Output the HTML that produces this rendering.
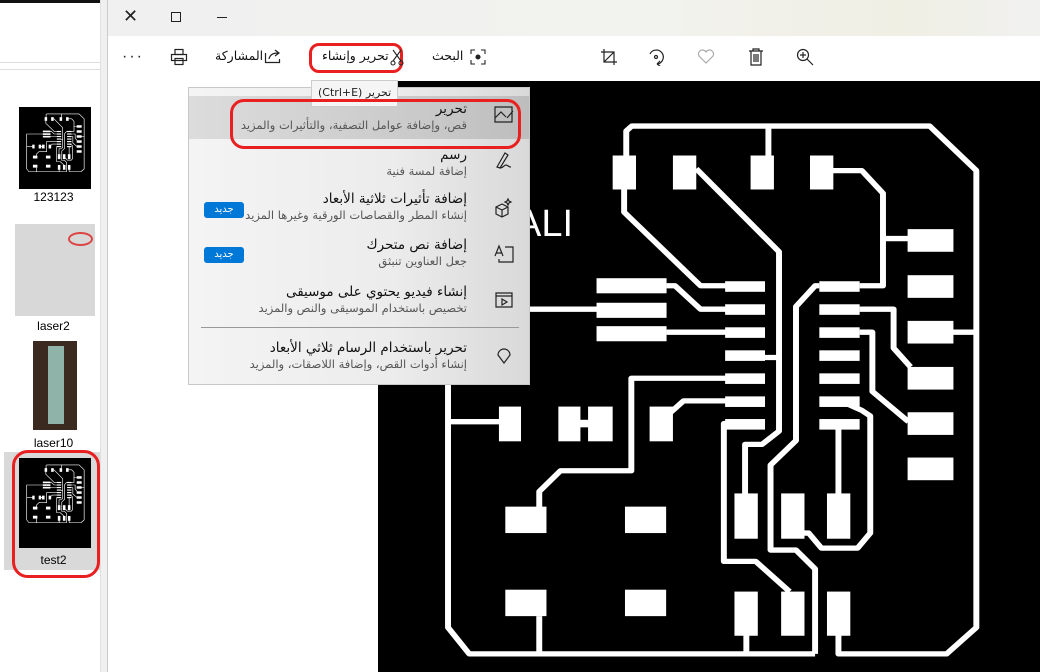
<!DOCTYPE html>
<html><head><meta charset="utf-8"><style>
*{margin:0;padding:0;box-sizing:border-box}
body{width:1040px;height:672px;overflow:hidden;background:#fff;font-family:"Liberation Sans","Noto Sans CJK SC",sans-serif;position:relative}
.a{position:absolute}
.ar{font-family:"DejaVu Sans","Liberation Sans",sans-serif;direction:rtl;white-space:nowrap}
.lbl{position:absolute;font-size:12px;color:#000;text-align:center;width:107px;left:0}
.mi{position:absolute;right:62px;text-align:right}
.mt{font-size:13.5px;color:#111}
.ms{font-size:11.5px;color:#555;margin-top:1px}
.badge{position:absolute;left:15px;width:40px;height:16px;background:#0078d7;color:#fff;font-size:10px;text-align:center;line-height:16px;border-radius:3px}
</style></head><body>
<svg width="0" height="0" style="position:absolute"><defs>
<g id="pcb">
<g fill="none" stroke="#fff" stroke-width="14" stroke-linejoin="round">
<path d="M585 245V135L598 122H1300L1410 240V1450L1340 1520H1085V1420"/>
<path d="M1030 1520H215L165 1450V800"/>
<path d="M165 800V607H520M165 905H290"/>
<path d="M580 290V350L760 545H820"/>
<path d="M750 235L945 455V735H912M945 735V930L905 965H865V1100"/>
<path d="M920 200V122"/>
<path d="M1070 240H1140L1190 300V545H1135M1190 420H1250"/>
<path d="M1355 668H1410"/>
<path d="M680 545H700L760 607H820M680 668H820"/>
<path d="M820 790H597V1035H430L380 1090V1140"/>
<path d="M820 850H720L680 890"/>
<path d="M820 910H815V1275H890L970 1355"/>
<path d="M1135 607H1215V710L1255 760M1135 668H1165V825L1250 905"/>
<path d="M1090 850L1140 875L1160 890V1200L1130 1240H1045L1015 1200H1000"/>
<path d="M1085 910V1100"/>
<path d="M380 1420V1520M868 1470V1520"/>
<path d="M1030 1520V1295L985 1245H925V1020L985 955V600L1030 545H1040"/>
</g>
<g fill="#fff">
<rect x="553" y="200" width="55" height="90"/><rect x="695" y="200" width="55" height="90"/><rect x="878" y="200" width="55" height="90"/><rect x="1018" y="200" width="55" height="90"/>
<rect x="1248" y="395" width="108" height="60"/><rect x="1248" y="517" width="108" height="60"/><rect x="1248" y="638" width="108" height="60"/><rect x="1248" y="760" width="108" height="60"/><rect x="1248" y="880" width="108" height="60"/><rect x="1248" y="1000" width="108" height="60"/>
<rect x="818" y="533" width="94" height="28"/><rect x="818" y="594" width="94" height="28"/><rect x="818" y="655" width="94" height="28"/><rect x="818" y="716" width="94" height="28"/><rect x="818" y="777" width="94" height="28"/><rect x="818" y="838" width="94" height="28"/><rect x="818" y="898" width="94" height="28"/>
<rect x="1040" y="533" width="95" height="28"/><rect x="1040" y="594" width="95" height="28"/><rect x="1040" y="655" width="95" height="28"/><rect x="1040" y="716" width="95" height="28"/><rect x="1040" y="777" width="95" height="28"/><rect x="1040" y="838" width="95" height="28"/><rect x="1040" y="898" width="95" height="28"/>
<rect x="515" y="525" width="165" height="40"/><rect x="515" y="590" width="165" height="40"/><rect x="515" y="652" width="165" height="40"/>
<rect x="285" y="865" width="52" height="92"/><rect x="425" y="865" width="52" height="92"/><rect x="495" y="865" width="58" height="92"/><rect x="470" y="900" width="30" height="20"/><rect x="640" y="865" width="55" height="92"/>
<rect x="300" y="1130" width="97" height="70"/><rect x="582" y="1130" width="97" height="70"/><rect x="300" y="1350" width="97" height="70"/><rect x="582" y="1350" width="97" height="70"/>
<rect x="840" y="1095" width="55" height="120"/><rect x="950" y="1095" width="55" height="120"/><rect x="1058" y="1095" width="55" height="120"/>
<rect x="840" y="1355" width="55" height="117"/><rect x="950" y="1355" width="55" height="117"/><rect x="1058" y="1355" width="55" height="117"/>
</g></g></defs></svg>
<!-- left explorer panel -->
<div class="a" style="left:0;top:0;width:107px;height:672px;background:#fff"></div>
<div class="a" style="left:0;top:0;width:100px;height:3px;background:#111"></div>
<div class="a" style="left:0;top:62px;width:100px;height:1px;background:#ddd"></div>
<div class="a" style="left:0;top:69px;width:100px;height:1px;background:#ddd"></div>
<div class="a" style="left:100px;top:0;width:7px;height:672px;background:#f0f0f0;border-left:1px solid #e0e0e0"></div>
<div class="a" style="left:19px;top:107px;width:72px;height:82px;background:#000"></div>
<svg class="a" style="left:26px;top:113px" width="60" height="60" viewBox="150 100 1300 1450" preserveAspectRatio="none"><use href="#pcb"/></svg>
<div class="lbl" style="top:190px">123123</div>
<div class="a" style="left:15px;top:224px;width:80px;height:92px;background:#d8d8d8"></div>
<div class="a" style="left:68px;top:232px;width:25px;height:14px;border:2px solid #d44;border-radius:50%"></div>
<div class="lbl" style="top:319px">laser2</div>
<div class="a" style="left:33px;top:341px;width:44px;height:89px;background:#3a2a20"></div>
<div class="a" style="left:48px;top:346px;width:16px;height:78px;background:#8fb3a8"></div>
<div class="lbl" style="top:436px">laser10</div>
<div class="a" style="left:4px;top:452px;width:96px;height:118px;background:#d9d9d9"></div>
<div class="a" style="left:19px;top:458px;width:72px;height:90px;background:#000"></div>
<svg class="a" style="left:26px;top:464px" width="60" height="60" viewBox="150 100 1300 1450" preserveAspectRatio="none"><use href="#pcb"/></svg>
<div class="lbl" style="top:553px">test2</div>
<div class="a" style="left:12px;top:450px;width:88px;height:128px;border:3px solid #e82020;border-radius:16px"></div>

<!-- main window -->
<div class="a" style="left:107px;top:0;width:933px;height:36px;background:linear-gradient(90deg,#f0f0f0,#f2f2ee 60%,#f0efe4 85%,#f1f1f0)"></div>
<div class="a" style="left:107px;top:0;width:1px;height:672px;background:#ccc"></div>
<div class="a" style="left:123px;top:6px;font-size:18px;color:#222">✕</div>
<div class="a" style="left:171px;top:12px;width:10px;height:10px;border:1px solid #222"></div>
<div class="a" style="left:217px;top:17px;width:10px;height:1px;background:#222"></div>

<!-- toolbar -->
<div class="a" style="left:122px;top:48px;font-size:16px;letter-spacing:2px;color:#222">···</div>
<svg class="a" style="left:170px;top:48px" width="18" height="18" viewBox="0 0 18 18" fill="none" stroke="#222" stroke-width="1.2"><rect x="5" y="1.5" width="8" height="5"/><rect x="1.5" y="6.5" width="15" height="6"/><rect x="5" y="10.5" width="8" height="6"/></svg>
<div class="a ar" style="left:215px;top:48px;font-size:12.5px;color:#111">المشاركة</div>
<svg class="a" style="left:264px;top:48px" width="18" height="16" viewBox="0 0 18 16" fill="none" stroke="#222" stroke-width="1.2"><path d="M1.5 5v9.5h14V11"/><path d="M5 11c1-5 5-6 9-6M11 2l4 3-4 3"/></svg>
<div class="a" style="left:309px;top:43px;width:94px;height:30px;border:3px solid #e82020;border-radius:10px"></div>
<div class="a ar" style="left:322px;top:48px;font-size:12.5px;color:#111">تحرير وإنشاء</div>
<svg class="a" style="left:390px;top:49px" width="14" height="17" viewBox="0 0 14 17" fill="none" stroke="#222" stroke-width="1.1"><path d="M3 1l8 11M11 1L3 12"/><circle cx="3" cy="14" r="2"/><circle cx="11" cy="14" r="2"/></svg>
<div class="a ar" style="left:432px;top:48px;font-size:12.5px;color:#111">البحث</div>
<svg class="a" style="left:470px;top:49px" width="16" height="16" viewBox="0 0 16 16" fill="none" stroke="#222" stroke-width="1.1"><path d="M1 5V1h4M11 1h4v4M15 11v4h-4M5 15H1v-4"/><circle cx="8" cy="8" r="2" fill="#222"/></svg>
<svg class="a" style="left:600px;top:48px" width="18" height="18" viewBox="0 0 18 18" fill="none" stroke="#222" stroke-width="1.2"><path d="M4 1v13h13M1 4h13v13M14 4L4 14"/></svg>
<svg class="a" style="left:648px;top:48px" width="18" height="18" viewBox="0 0 18 18" fill="none" stroke="#222" stroke-width="1.2"><path d="M2 6A7 7 0 1 1 9 16"/><path d="M9 16l3-3M9 16l3 2"/><circle cx="8" cy="9" r="1.5"/></svg>
<svg class="a" style="left:697px;top:49px" width="18" height="16" viewBox="0 0 18 16" fill="none" stroke="#aaa" stroke-width="1.2"><path d="M9 14L2 7a3.5 3.5 0 0 1 7-4 3.5 3.5 0 0 1 7 4z"/></svg>
<svg class="a" style="left:748px;top:48px" width="16" height="18" viewBox="0 0 16 18" fill="none" stroke="#222" stroke-width="1.2"><path d="M1 3h14M5 3V1h6v2M3 3v14h10V3M6 6v8M8 6v8M10 6v8"/></svg>
<svg class="a" style="left:796px;top:48px" width="18" height="18" viewBox="0 0 18 18" fill="none" stroke="#222" stroke-width="1.2"><circle cx="7" cy="7" r="5.5"/><path d="M11 11l6 6M7 4v6M4 7h6"/></svg>

<!-- image area -->
<div class="a" style="left:378px;top:81px;width:662px;height:591px;background:#000"></div>
<svg class="a" style="left:378px;top:80px" width="662" height="592" viewBox="0 0 1560 1568" preserveAspectRatio="none"><use href="#pcb"/></svg>
<div class="a" style="left:516px;top:203px;font-size:38px;color:#fff;font-family:'Liberation Sans',sans-serif">ALI</div>

<!-- tooltip -->
<div class="a" style="left:311px;top:80px;width:87px;height:27px;background:#f5f5f5;border:1px solid #ccc;z-index:3"></div>
<div class="a ar" style="left:318px;top:86px;font-size:11px;color:#222;z-index:4">تحرير (Ctrl+E)</div>

<!-- menu -->
<div class="a" style="left:188px;top:87px;width:342px;height:298px;background:linear-gradient(90deg,#f4f4f4,#ececec 60%,#d9d9d9);border:1px solid #c8c8c8;z-index:2">
 <div class="a" style="left:0;top:8px;width:340px;height:43px;background:linear-gradient(90deg,#dcdcdc,#c9c9c9 70%,#bdbdbd)"></div>
 <div class="mi ar" style="top:13px"><div class="mt">تحرير</div><div class="ms">قص، وإضافة عوامل التصفية، والتأثيرات والمزيد</div></div>
 <div class="mi ar" style="top:59px"><div class="mt">رسم</div><div class="ms">إضافة لمسة فنية</div></div>
 <div class="mi ar" style="top:103px"><div class="mt">إضافة تأثيرات ثلاثية الأبعاد</div><div class="ms">إنشاء المطر والقصاصات الورقية وغيرها المزيد</div></div>
 <div class="badge ar" style="top:114px;direction:ltr">جديد</div>
 <div class="mi ar" style="top:149px"><div class="mt">إضافة نص متحرك</div><div class="ms">جعل العناوين تنبثق</div></div>
 <div class="badge ar" style="top:159px;direction:ltr">جديد</div>
 <div class="mi ar" style="top:196px"><div class="mt">إنشاء فيديو يحتوي على موسيقى</div><div class="ms">تخصيص باستخدام الموسيقى والنص والمزيد</div></div>
 <div class="a" style="left:12px;top:239px;width:318px;height:1px;background:#999"></div>
 <div class="mi ar" style="top:252px"><div class="mt">تحرير باستخدام الرسام ثلاثي الأبعاد</div><div class="ms">إنشاء أدوات القص، وإضافة اللاصقات، والمزيد</div></div>
 <svg class="a" style="left:304px;top:16px" width="22" height="22" viewBox="0 0 22 22" fill="none" stroke="#222" stroke-width="1.2"><path d="M2 3h17v15H2zM2 14l6-6 5 5M14 14l6-7"/></svg>
 <svg class="a" style="left:304px;top:62px" width="22" height="22" viewBox="0 0 22 22" fill="none" stroke="#222" stroke-width="1.2"><path d="M4 17L12 3l3 2L7 18zM7 18c3 0 4-3 6-3s2 2 5 2"/></svg>
 <svg class="a" style="left:304px;top:108px" width="22" height="22" viewBox="0 0 22 22" fill="none" stroke="#222" stroke-width="1.2"><path d="M3 11l6-3 6 3v7l-6 3-6-3zM3 11l6 3 6-3M9 14v7M15 3l1 2 2 1-2 1-1 2-1-2-2-1 2-1z"/></svg>
 <svg class="a" style="left:304px;top:155px" width="22" height="22" viewBox="0 0 22 22" fill="none" stroke="#222" stroke-width="1.2"><path d="M2 13L6 3l4 10M3.5 10h5M12 4h8v15H6v-3"/></svg>
 <svg class="a" style="left:304px;top:200px" width="22" height="22" viewBox="0 0 22 22" fill="none" stroke="#222" stroke-width="1.2"><path d="M3 5h16v14H3zM3 8h16M9 11v6l5-3z"/></svg>
 <svg class="a" style="left:304px;top:255px" width="22" height="22" viewBox="0 0 22 22" fill="none" stroke="#222" stroke-width="1.2"><path d="M11 20L5 12a6 6 0 1 1 12 0z"/></svg>
</div>
<div class="a" style="left:230px;top:99px;width:291px;height:50px;border:3px solid #e82020;border-radius:14px;z-index:3"></div>
</body></html>
